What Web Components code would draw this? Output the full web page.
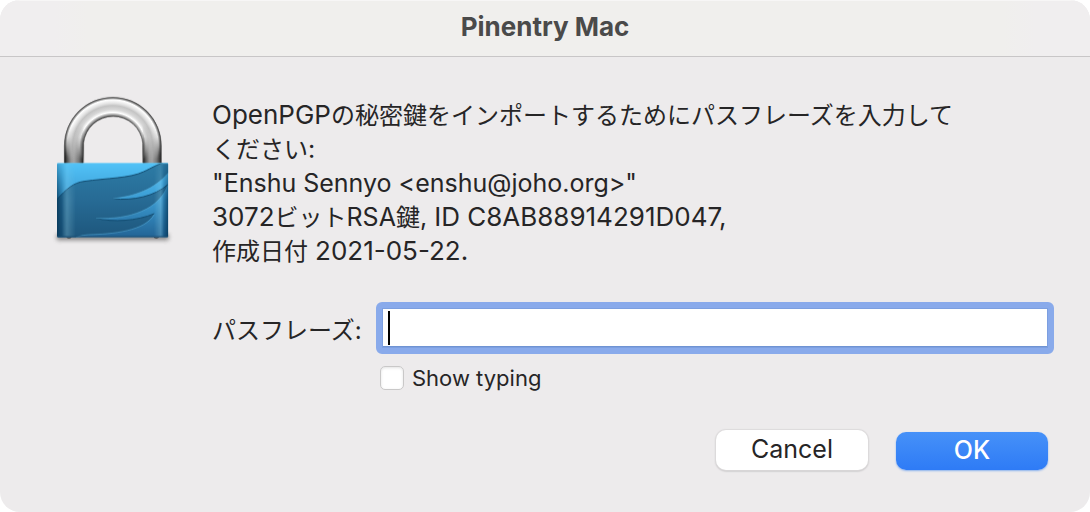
<!DOCTYPE html>
<html lang="ja">
<head>
<meta charset="utf-8">
<meta name="viewport" content="width=device-width, initial-scale=1">
<title>Pinentry Mac</title>
<style>
  body {
    margin: 0;
    background: #fff;
    color: #262526;
    font-family: Inter, "Noto Sans CJK JP", sans-serif;
    font-size: 25px;
  }
</style>
</head>
<body>
<dialog-window heading="Pinentry Mac">
  <lock-icon slot="icon"></lock-icon>
  <key-message></key-message>
  <passphrase-field label="パスフレーズ:" toggle="Show typing"></passphrase-field>
  <push-button slot="actions" label="Cancel"></push-button>
  <push-button slot="actions" label="OK" kind="primary"></push-button>
</dialog-window>

<script>
class DialogWindow extends HTMLElement {
  constructor() {
    super();
    this.attachShadow({ mode: "open" });
  }
  connectedCallback() {
    this.shadowRoot.innerHTML = `
      <style>
        :host {
          display: flex;
          flex-direction: column;
          min-height: 100vh;
          box-sizing: border-box;
          overflow: hidden;
          border-radius: 20px;
          background: #edebec;
        }
        header {
          padding: 10px 20px 12px;
          background: linear-gradient(90deg, #f0eeef 5%, #f0efed 8%, #f0efed 92%, #f0eeef 95%);
          border-bottom: 1px solid #c8c6c7;
          box-shadow: inset 0 1px #f7f6f6;
        }
        h1 {
          margin: 0;
          color: #4a4a4a;
          font-size: 26px;
          line-height: 34px;
          font-weight: 700;
          text-align: center;
        }
        main {
          display: flex;
          gap: 22px;
          padding: 28px 36px 0 40px;
        }
        .content {
          flex: 1;
          min-width: 0;
          padding-top: 13px;
        }
        footer {
          display: flex;
          justify-content: flex-end;
          align-items: flex-end;
          gap: 28px;
          padding: 38px 42px 42px;
        }
      </style>
      <header><h1>${this.getAttribute("heading")}</h1></header>
      <main>
        <slot name="icon"></slot>
        <div class="content"><slot></slot></div>
      </main>
      <footer><slot name="actions"></slot></footer>
    `;
  }
}
customElements.define("dialog-window", DialogWindow);

class LockIcon extends HTMLElement {
  constructor() {
    super();
    this.attachShadow({ mode: "open" });
  }
  connectedCallback() {
    this.shadowRoot.innerHTML = `
      <style>
        :host { display: block; flex: none; width: 150px; }
        svg { display: block; width: 100%; }
      </style>
      <svg viewBox="0 0 450 510" aria-hidden="true">
        <defs>
          <radialGradient id="arch" gradientUnits="userSpaceOnUse" cx="218" cy="182" r="146">
            <stop offset=".6" stop-color="#555"/>
            <stop offset=".64" stop-color="#aaa"/>
            <stop offset=".68" stop-color="#fff"/>
            <stop offset=".74" stop-color="#d8d8d8"/>
            <stop offset=".82" stop-color="#c4c4c4"/>
            <stop offset=".87" stop-color="#e2e2e2"/>
            <stop offset=".94" stop-color="#fff"/>
            <stop offset=".97" stop-color="#999"/>
            <stop offset="1" stop-color="#444"/>
          </radialGradient>
          <linearGradient id="leg">
            <stop offset="0" stop-color="#111"/>
            <stop offset=".15" stop-color="#555"/>
            <stop offset=".35" stop-color="#999"/>
            <stop offset=".5" stop-color="#a4a4a4"/>
            <stop offset=".75" stop-color="#777"/>
            <stop offset="1" stop-color="#1a1a1a"/>
          </linearGradient>
          <linearGradient id="fade" x2="0" y2="1">
            <stop offset="0" stop-color="#fff" stop-opacity="0"/>
            <stop offset=".3" stop-color="#fff" stop-opacity=".2"/>
            <stop offset=".85" stop-color="#fff"/>
          </linearGradient>
          <mask id="legmask"><rect x="60" y="120" width="320" height="120" fill="url(#fade)"/></mask>
          <linearGradient id="body" x2="0" y2="1">
            <stop offset="0" stop-color="#52c3f8"/>
            <stop offset=".45" stop-color="#3d9fd6"/>
            <stop offset="1" stop-color="#236495"/>
          </linearGradient>
          <linearGradient id="wing" x2="0" y2="1">
            <stop offset="0" stop-color="#2d7ca6"/>
            <stop offset=".5" stop-color="#276b95"/>
            <stop offset="1" stop-color="#1e577d"/>
          </linearGradient>
          <linearGradient id="sides">
            <stop offset="0" stop-color="#02304f" stop-opacity=".75"/>
            <stop offset=".045" stop-color="#063b60" stop-opacity=".35"/>
            <stop offset=".09" stop-color="#a5ddec" stop-opacity=".25"/>
            <stop offset=".17" stop-color="#a5ddec" stop-opacity="0"/>
            <stop offset=".87" stop-color="#a5ddec" stop-opacity="0"/>
            <stop offset=".93" stop-color="#a5ddec" stop-opacity=".25"/>
            <stop offset=".96" stop-color="#063b60" stop-opacity=".35"/>
            <stop offset="1" stop-color="#02304f" stop-opacity=".75"/>
          </linearGradient>
          <linearGradient id="topfade" x2="0" y2="1">
            <stop offset="0" stop-color="#fff" stop-opacity=".3"/>
            <stop offset=".5" stop-color="#fff"/>
          </linearGradient>
          <mask id="sidemask"><rect x="51" y="234" width="334" height="223" fill="url(#topfade)"/></mask>
          <clipPath id="clip"><rect x="51" y="234" width="334" height="223" rx="4"/></clipPath>
          <clipPath id="arm"><path d="M73 240v-58a145 145 0 0 1 291 0v58h-56v-66a89 89 0 0 0-177 0v66z"/></clipPath>
          <filter id="soft" x="-10%" y="-100%" width="120%" height="300%"><feGaussianBlur stdDeviation="7"/></filter>
        </defs>

        <rect x="50" y="446" width="336" height="20" rx="4" fill="#555" opacity=".65" filter="url(#soft)"/>
        <path d="M80 455h14v4q-7 5-14 0zM342 455h14v4q-7 5-14 0z" fill="#555"/>

        <path d="M73 240v-58a145 145 0 0 1 291 0v58h-56v-66a89 89 0 0 0-177 0v66z" fill="url(#arch)"/>
        <g mask="url(#legmask)">
          <path d="M73 240V120h58v120z" fill="url(#leg)" clip-path="url(#arm)"/>
          <path d="M308 240V120h56v120z" fill="url(#leg)" clip-path="url(#arm)"/>
        </g>
        <path d="M73 234v-52a145 145 0 0 1 291 0v52M131 234v-60a89 89 0 0 1 177 0v60" fill="none" stroke="#444" stroke-width="2" opacity=".7"/>

        <g clip-path="url(#clip)">
          <path d="M51 234h334v223H51z" fill="url(#body)"/>
          <path d="M51 343C78 313 100 293 132 289C200 279 270 280 311 260C337 248 350 239 368 234H385V263C342 314 285 333 218 341C280 348 345 333 383 299C358 373 270 404 168 400C220 412 290 408 343 386C316 438 220 447 145 449Q125 450 108 457H51z" fill="url(#wing)"/>
          <path d="M51 343C78 313 100 293 132 289C200 279 270 280 311 260C337 248 350 239 368 234M218 341C280 348 345 333 383 299M168 400C220 412 290 408 343 386" fill="none" stroke="#124c71" stroke-width="3"/>
          <path d="M385 263C342 314 285 333 218 341M383 301C358 373 270 404 168 400M343 388C316 438 220 447 145 449Q125 450 108 457" fill="none" stroke="#60b3dc" stroke-width="2" opacity=".7"/>
          <path d="M51 234h334v223H51z" fill="url(#sides)" mask="url(#sidemask)"/>
          <path d="M51 235h334" stroke="#70cdf5" stroke-width="2"/>
          <path d="M51 455h334" stroke="#174b70" stroke-width="3"/>
        </g>
      </svg>
    `;
  }
}
customElements.define("lock-icon", LockIcon);

class KeyMessage extends HTMLElement {
  constructor() {
    super();
    this.attachShadow({ mode: "open" });
  }
  connectedCallback() {
    this.shadowRoot.innerHTML = `
      <style>
        :host { display: block; margin-bottom: 34px; }
        p { margin: 0; line-height: 34px; }
        .ja { font-size: 24px; line-height: 1; }
        .num { font-size: 26px; line-height: 1; }
      </style>
      <p><span class="num">OpenPGP</span><span class="ja">の秘密鍵をインポートするためにパスフレーズを入力して<br>ください</span>:</p>
      <p>"Enshu Sennyo &lt;enshu@joho.org&gt;"</p>
      <p><span class="num">3072</span><span class="ja">ビット</span>RSA<span class="ja">鍵</span>, <span class="num">ID C8AB88914291D047,</span></p>
      <p><span class="ja">作成日付</span> <span class="num">2021-05-22.</span></p>
    `;
  }
}
customElements.define("key-message", KeyMessage);

class PassphraseField extends HTMLElement {
  constructor() {
    super();
    this.attachShadow({ mode: "open" });
  }
  connectedCallback() {
    this.shadowRoot.innerHTML = `
      <style>
        :host {
          display: grid;
          grid-template-columns: 152px 1fr;
          column-gap: 12px;
          row-gap: 10px;
          align-items: center;
        }
        .name { padding-top: 6px; font-size: 24px; line-height: 34px; white-space: nowrap; }
        .entry {
          box-sizing: border-box;
          width: 100%;
          height: 52px;
          padding: 0 8px;
          border: 6px solid #89aaeb;
          border-radius: 6px;
          outline: none;
          /* static insertion point */
          background: linear-gradient(#000, #000) 6px center / 2px 34px no-repeat, #fff;
          box-shadow: inset 0 0 0 1px #7c9fe0, inset 0 -2px #6f93d3;
          caret-color: transparent;
          font: inherit;
        }
        .toggle {
          grid-column: 2;
          display: flex;
          align-items: center;
          gap: 8px;
          padding-left: 4px;
          font-size: 22px;
          line-height: 28px;
        }
        .toggle input {
          appearance: none;
          width: 24px;
          height: 24px;
          margin: 0;
          border: 1px solid #c9c8c8;
          border-radius: 5px;
          background: #fff;
          box-shadow: inset 0 1px 3px #e2e2e2;
        }
      </style>
      <label class="name" for="entry">${this.getAttribute("label")}</label>
      <input class="entry" id="entry" type="password">
      <div class="toggle">
        <input type="checkbox" id="show">
        <label for="show">${this.getAttribute("toggle")}</label>
      </div>
    `;
    const entry = this.shadowRoot.querySelector("#entry");
    this.shadowRoot.querySelector("#show").addEventListener("change", (e) => {
      entry.type = e.target.checked ? "text" : "password";
    });
  }
}
customElements.define("passphrase-field", PassphraseField);

class PushButton extends HTMLElement {
  constructor() {
    super();
    this.attachShadow({ mode: "open" });
  }
  connectedCallback() {
    this.shadowRoot.innerHTML = `
      <style>
        :host { display: block; }
        button {
          display: block;
          width: 152px;
          height: 40px;
          padding: 0 0 2px;
          border: none;
          border-radius: 10px;
          background: #fff;
          color: #262526;
          font: inherit;
          line-height: 34px;
          box-shadow: 0 0 1px 1px #dddbdc, 0 1px 2px #9a999a;
        }
        :host([kind="primary"]) button {
          height: 38px;
          background: linear-gradient(#4691f8, #2e7bf6);
          color: #fff;
          font-weight: 500;
          box-shadow: 0 1px 2px #8bb2ee;
        }
      </style>
      <button type="button">${this.getAttribute("label")}</button>
    `;
  }
}
customElements.define("push-button", PushButton);
</script>
</body>
</html>
